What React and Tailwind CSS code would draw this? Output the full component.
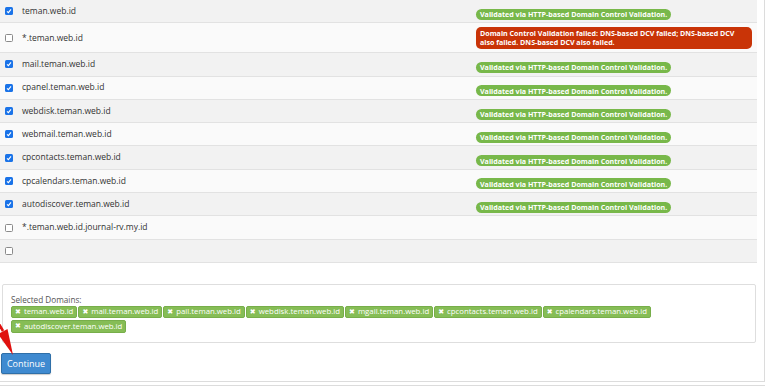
import React from "react";

const rows = [
  { d: "teman.web.id", c: true, ok: true },
  { d: "*.teman.web.id", c: false, ok: false },
  { d: "mail.teman.web.id", c: true, ok: true },
  { d: "cpanel.teman.web.id", c: true, ok: true },
  { d: "webdisk.teman.web.id", c: true, ok: true },
  { d: "webmail.teman.web.id", c: true, ok: true },
  { d: "cpcontacts.teman.web.id", c: true, ok: true },
  { d: "cpcalendars.teman.web.id", c: true, ok: true },
  { d: "autodiscover.teman.web.id", c: true, ok: true },
  { d: "*.teman.web.id.journal-rv.my.id", c: false, ok: null },
  { d: "", c: false, ok: null },
];

const tags = [
  "teman.web.id",
  "mail.teman.web.id",
  "pail.teman.web.id",
  "webdisk.teman.web.id",
  "mgail.teman.web.id",
  "cpcontacts.teman.web.id",
  "cpalendars.teman.web.id",
  "autodiscover.teman.web.id",
];

function Box({ checked }) {
  if (checked) {
    return (
      <span className="flex h-[8px] w-[8px] items-center justify-center rounded-[1.5px] bg-[#1a73e8]">
        <svg width="6" height="6" viewBox="0 0 6 6">
          <path d="M1 3.3 L2.4 4.6 L5 1.4" stroke="white" strokeWidth="1.1" fill="none" />
        </svg>
      </span>
    );
  }
  return <span className="block h-[8px] w-[8px] rounded-[1.5px] border border-[#8a8a8a] bg-white" />;
}

export default function App() {
  return (
    <div className="relative h-[387px] w-[768px] overflow-hidden bg-white font-['Open_Sans',sans-serif] text-[#333]">
      <div className="w-[765px] border-r border-b border-[#dcdcdc] pr-[7px] pb-[7px]">
        <div className="flex flex-col">
          {rows.map((r, i) => (
            <div
              key={i}
              className={`flex items-center border-b border-[#e2e2e2] ${i === 1 ? "h-[30px]" : "h-[23.3px]"} ${i % 2 === 0 ? "bg-[#f2f2f2]" : "bg-[#fafafa]"}`}
            >
              <div className="flex w-[22px] shrink-0 justify-start pl-[5px]">
                <Box checked={r.c} />
              </div>
              <div className="w-[454px] shrink-0 text-[8.5px] leading-none">{r.d}</div>
              <div className="flex-1 pr-[5px]">
                {r.ok === true && (
                  <span className="inline-block rounded-full bg-[#78b84a] px-[4px] py-[1.5px] text-[7.1px] font-bold leading-[8px] text-white">
                    Validated via HTTP-based Domain Control Validation.
                  </span>
                )}
                {r.ok === false && (
                  <div className="rounded-[5px] bg-[#c93407] px-[4px] py-[2px] text-[7.1px] font-bold leading-[9px] text-white">
                    Domain Control Validation failed: DNS-based DCV failed; DNS-based DCV also failed. DNS-based DCV also failed.
                  </div>
                )}
              </div>
            </div>
          ))}
        </div>

        <div className="mt-[21px] ml-[2px] mr-[1px] rounded-[2px] border border-[#dedede] bg-white px-[8px] pt-[10px] pb-[9px]">
          <div className="text-[8.2px] leading-[10px] text-[#555]">Selected Domains:</div>
          <div className="mt-[1px] flex w-[660px] flex-wrap gap-x-[1px] gap-y-[2px]">
            {tags.map((t) => (
              <span
                key={t}
                className="flex h-[12.5px] items-center gap-[3px] rounded-[2px] border border-[#77ae4a] bg-[#86bd56] px-[3px] text-[7.8px] leading-none text-white"
              >
                <span className="font-['DejaVu_Sans',sans-serif] text-[7px]">✖</span>
                {t}
              </span>
            ))}
          </div>
        </div>

        <button className="mt-[10px] ml-[1px] flex h-[21px] w-[50px] items-center justify-center rounded-[2px] border border-[#2f6fa8] bg-[#3f8ad0] text-[9px] text-white shadow-[0_1px_1px_rgba(0,0,0,0.2)]">
          Continue
        </button>
      </div>
      <div className="mt-[3px] h-[1px] w-[765px] bg-[#dcdcdc]" />

      <svg className="absolute left-0 top-[300px]" width="30" height="60" viewBox="0 300 30 60">
        <path d="M-12 305 L3 331" stroke="#e0110f" strokeWidth="2.6" fill="none" />
        <path d="M13 355 L7.5 329 L-2 334 Z" fill="#e0110f" />
      </svg>
    </div>
  );
}
